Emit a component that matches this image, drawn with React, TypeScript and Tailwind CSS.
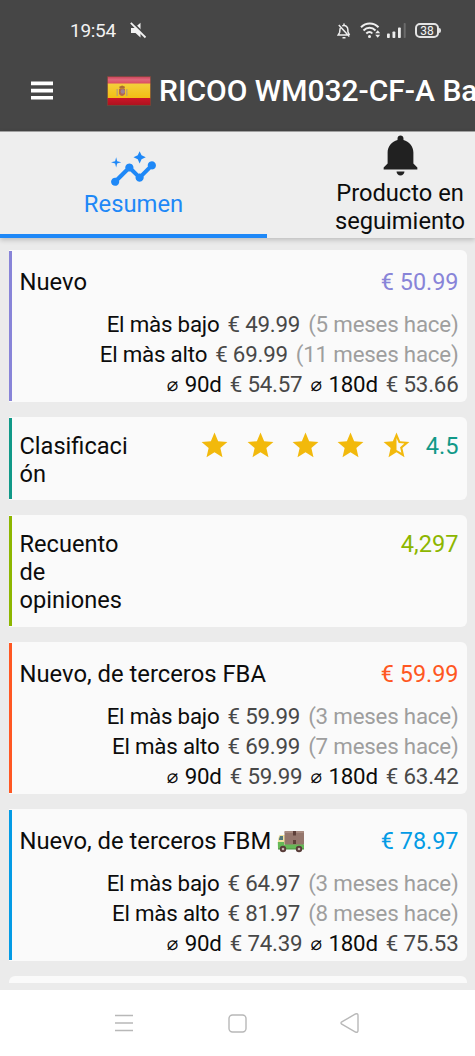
import type { ReactNode } from "react";
import { IoMdNotifications } from "react-icons/io";
import { MdInsights, MdStar, MdStarHalf } from "react-icons/md";

type Stats = { low: string; lowAgo: string; high: string; highAgo: string; avg90: string; avg180: string };

function StatusBar() {
  return (
    <div className="flex h-[61px] items-center pl-[70px] pr-[34px] text-white">
      <span className="w-[46px] whitespace-nowrap text-[19px] leading-[22px] tracking-[-0.3px] text-[#f2f2f2]">19:54</span>
      <svg className="ml-[14px]" width="17" height="17" viewBox="0 0 17 17">
        <path d="M1 6h3.500L10.500 .8v14.800L5.500 11H1z" fill="#f2f2f2" />
        <path d="M1.500 -.5l16 16" stroke="#464646" strokeWidth="2" />
        <path d="M.8 .8l14.700 14.700" stroke="#f2f2f2" strokeWidth="1.800" />
      </svg>
      <svg className="ml-auto" width="14" height="16" viewBox="0 0 14 16" fill="none" stroke="#eee" strokeWidth="1.500">
        <path d="M7 .5v2M3.300 5C2.700 6.500 3 8 2.600 9.500L1.200 12h9.500M5.200 2.900c3.600-1.200 5.700 1.200 5.700 4.100v1.800l1.600 3.200M1.800 2l10.500 11.500M5.500 14.700h3" />
      </svg>
      <svg className="ml-[9px]" width="21" height="17" viewBox="0 0 21 17" fill="none" stroke="#eee" strokeWidth="2">
        <path d="M1 5.200C6 .2 13.500.2 18.500 5.200M3.500 8.500c3.600-3.600 8.500-3.600 12 0M6.300 11.500c2-2 4.400-2 6 0" />
        <circle cx="9.500" cy="14.500" r="1.500" fill="#eee" stroke="none" />
        <path d="M15.200 11.200l2.500-3 2.500 3zM15.200 12.800l2.500 3 2.500-3z" fill="#eee" stroke="none" />
      </svg>
      <svg className="ml-[6px]" width="20" height="17" viewBox="0 0 20 17" fill="#eee">
        <rect x="0" y="11.500" width="2.800" height="4.500" rx=".8" />
        <rect x="5.500" y="9.500" width="2.800" height="6.500" rx=".8" />
        <rect x="11" y="5.500" width="2.800" height="10.500" rx=".8" />
        <rect x="16.700" y="1" width="2" height="15" rx=".8" fill="#6b6b6b" />
      </svg>
      <div className="ml-2 flex items-center">
        <div className="flex h-[15px] w-[24px] items-center justify-center rounded-[5px] border-2 border-[#e4e4e4] text-[12px] leading-none text-[#f4f4f4]">38</div>
        <div className="h-[5px] w-[2px] rounded-r bg-[#ddd]" />
      </div>
    </div>
  );
}

function SpanishFlag() {
  return (
    <svg className="ml-[54px] shrink-0" width="44" height="30" viewBox="0 0 44 30">
      <defs>
        <linearGradient id="flagTop" x1="0" y1="0" x2="0" y2="1">
          <stop offset="0" stopColor="#c9405a" />
          <stop offset=".4" stopColor="#e0687a" />
          <stop offset="1" stopColor="#d9455a" />
        </linearGradient>
        <linearGradient id="flagMid" x1="0" y1="0" x2="0" y2="1">
          <stop offset="0" stopColor="#f3d03c" />
          <stop offset="1" stopColor="#f3bd12" />
        </linearGradient>
        <linearGradient id="flagLow" x1="0" y1="0" x2="0" y2="1">
          <stop offset="0" stopColor="#cc1526" />
          <stop offset="1" stopColor="#ad1320" />
        </linearGradient>
      </defs>
      <rect x=".5" y=".5" width="43" height="8" fill="url(#flagTop)" />
      <rect x=".5" y="7.500" width="43" height="15" fill="url(#flagMid)" />
      <rect x=".5" y="22" width="43" height="7" fill="url(#flagLow)" />
      <path d="M10.200 13v7M19.800 13v7" stroke="#b9a078" strokeWidth="1.300" />
      <path d="M12 13h6v5q-3 4-6 0z" fill="#b5654a" />
      <path d="M12.800 12.800l-.6-2 2.900-1.300 2.900 1.300-.6 2z" fill="#a96b35" />
      <circle cx="15.800" cy="15.500" r="2.200" fill="#9d8294" />
      <rect x=".5" y=".5" width="43" height="29" fill="none" stroke="#7b4a35" strokeOpacity=".6" />
    </svg>
  );
}

function Truck() {
  return (
    <svg className="ml-[6px] mt-[2px] shrink-0" width="28" height="23" viewBox="0 0 28 23">
      <path d="M1 9l1.500-4H8v9H1z" fill="#f0e2a0" />
      <path d="M2 9l1-3h3v4H2z" fill="#52777b" />
      <rect x="7.500" y="1" width="19.500" height="14" rx="1" fill="#94766c" />
      <rect x="7.500" y="1" width="19.500" height="2" rx="1" fill="#a88b80" />
      <path d="M16 1h3v4.500h-3zM16 10h3v4h-3z" fill="#5e4039" />
      <path d="M.8 12H7v2.500h20V19H1z" fill="#66b957" />
      <path d="M1 18.500h26v1H1z" fill="#4c8f43" />
      <circle cx="6" cy="19" r="3.200" fill="#573b38" />
      <circle cx="6" cy="19" r="1.300" fill="#c8b7b1" />
      <circle cx="22" cy="19" r="3.200" fill="#573b38" />
      <circle cx="22" cy="19" r="1.300" fill="#c8b7b1" />
    </svg>
  );
}

function Card({ height, accent, padding, children }: { height: string; accent: string; padding: string; children?: ReactNode }) {
  return (
    <section className={`flex shrink-0 rounded-r-[6px] bg-[#fafafa] ${height}`}>
      <div className={`my-px w-[3px] shrink-0 ${accent}`} />
      <div className={`min-w-0 grow pl-[7.500px] pr-[8.500px] ${padding}`}>{children}</div>
    </section>
  );
}

function Extreme({ label, value, ago }: { label: string; value: string; ago: string }) {
  return (
    <div className="flex justify-end gap-2">
      <span>{label}</span>
      <span className="text-[#484848]">€ {value}</span>
      <span className="text-[#9e9e9e]">({ago} meses hace)</span>
    </div>
  );
}

function Average({ days, value }: { days: string; value: string }) {
  return (
    <>
      <span className="w-[12px] font-['DejaVu_Sans'] text-[19px]">⌀</span>
      <span className="ml-[6px]">{days}</span>
      <span className="ml-2 text-[#484848]">€ {value}</span>
    </>
  );
}

function PriceCard({ title, price, accent, color, stats, icon }: { title: string; price: string; accent: string; color: string; stats: Stats; icon?: ReactNode }) {
  return (
    <Card height="h-[152px]" accent={accent} padding="pt-[18px]">
      <div className="flex h-[28px] items-center text-[23.800px] leading-[28px]">
        <span>{title}</span>
        {icon}
        <span className={`ml-auto text-[23.400px] ${color}`}>{price}</span>
      </div>
      <div className="mt-[13px] whitespace-nowrap text-[22.300px] leading-[30px] tracking-[-0.2px]">
        <Extreme label="El màs bajo" value={stats.low} ago={stats.lowAgo} />
        <Extreme label="El màs alto" value={stats.high} ago={stats.highAgo} />
        <div className="flex justify-end">
          <Average days="90d" value={stats.avg90} />
          <span className="w-[8px]" />
          <Average days="180d" value={stats.avg180} />
        </div>
      </div>
    </Card>
  );
}

export default function App() {
  return (
    <div className="flex h-[1056px] w-[475px] flex-col overflow-hidden bg-[#ebebeb] font-[Roboto,sans-serif] text-[#0c0c0c]">
      <header className="h-[131px] shrink-0 bg-[#464646]">
        <StatusBar />
        <div className="flex h-[60px] items-center pl-[31px]">
          <svg className="shrink-0" width="22" height="20" viewBox="0 0 22 20" fill="#fff">
            <path d="M0 .5h22v3.700H0zM0 7.700h22v3.700H0zM0 14.900h22v3.700H0z" />
          </svg>
          <SpanishFlag />
          <h1 className="ml-2 whitespace-nowrap text-[30px] font-medium leading-[36px] text-white">RICOO WM032-CF-A Ba</h1>
        </div>
      </header>

      <nav className="flex h-[107px] shrink-0 border-t border-[#a0a0a0] bg-[#eeeeee] shadow-[0_2px_5px_rgba(0,0,0,0.2)]">
        <div className="flex w-[267px] shrink-0 flex-col items-center border-b-[4px] border-[#1e88f7] pt-[13px] text-[#1e88f7]">
          <MdInsights size={49} />
          <span className="mt-[-4px] text-[23.800px] leading-[28px]">Resumen</span>
        </div>
        <div className="flex w-[266px] shrink-0 flex-col items-center text-center">
          <IoMdNotifications className="mt-[-1px] text-[#212121]" size={49} />
          <span className="mt-[-1px] text-[23.700px] leading-[28px]">Producto en<br />seguimiento</span>
        </div>
      </nav>

      <main className="flex h-[745px] shrink-0 flex-col gap-[15px] overflow-hidden pl-[9px] pr-2 pt-3">
        <PriceCard title="Nuevo" price="€ 50.99" accent="bg-[#8884d8]" color="text-[#8884d8]"
          stats={{ low: "49.99", lowAgo: "5", high: "69.99", highAgo: "11", avg90: "54.57", avg180: "53.66" }} />
        <Card height="h-[83px]" accent="bg-[#119988]" padding="pt-[15px]">
          <div className="flex items-start justify-between text-[23.600px] leading-[28px]">
            <span>Clasificaci<br />ón</span>
            <div className="flex items-center text-[#119988]">
              <div className="flex h-[28px] items-center gap-[14.400px] pb-[2px] text-[#f2b90c]">
                <MdStar size={31} />
                <MdStar size={31} />
                <MdStar size={31} />
                <MdStar size={31} />
                <MdStarHalf size={31} />
              </div>
              <span className="ml-[14px]">4.5</span>
            </div>
          </div>
        </Card>
        <Card height="h-[111.500px]" accent="bg-[#8db600]" padding="pt-[15px]">
          <div className="flex items-start justify-between text-[23.600px] leading-[28px]">
            <span>Recuento<br />de<br />opiniones</span>
            <span className="text-[#8db600]">4,297</span>
          </div>
        </Card>
        <PriceCard title="Nuevo, de terceros FBA" price="€ 59.99" accent="bg-[#ff5722]" color="text-[#ff5722]"
          stats={{ low: "59.99", lowAgo: "3", high: "69.99", highAgo: "7", avg90: "59.99", avg180: "63.42" }} />
        <PriceCard title="Nuevo, de terceros FBM" price="€ 78.97" accent="bg-[#039be5]" color="text-[#039be5]" icon={<Truck />}
          stats={{ low: "64.97", lowAgo: "3", high: "81.97", highAgo: "8", avg90: "74.39", avg180: "75.53" }} />
        <div className="h-2 shrink-0 rounded-t-[6px] bg-[#fafafa]" />
      </main>

      <footer className="mt-[7px] flex h-[66px] shrink-0 items-center bg-white pl-[115px]">
        <svg width="18" height="18" viewBox="0 0 18 18" stroke="#b8b8b8" strokeWidth="1.300"><path d="M0 1.500h18M0 9h18M0 16.500h18" /></svg>
        <svg className="ml-[95px]" width="19" height="19" viewBox="0 0 19 19" fill="none" stroke="#b8b8b8" strokeWidth="1.400"><rect x="1" y="1" width="17" height="17" rx="3.500" /></svg>
        <svg className="ml-[93px]" width="20" height="20" viewBox="0 0 20 20" fill="none" stroke="#b8b8b8" strokeWidth="1.400"><path d="M1.800 8.800L15.500 1q2.500-.9 2.500 1.500v15q0 2.400-2.500 1.500L1.800 11.200q-1.600-1.200 0-2.400z" /></svg>
      </footer>
    </div>
  );
}
